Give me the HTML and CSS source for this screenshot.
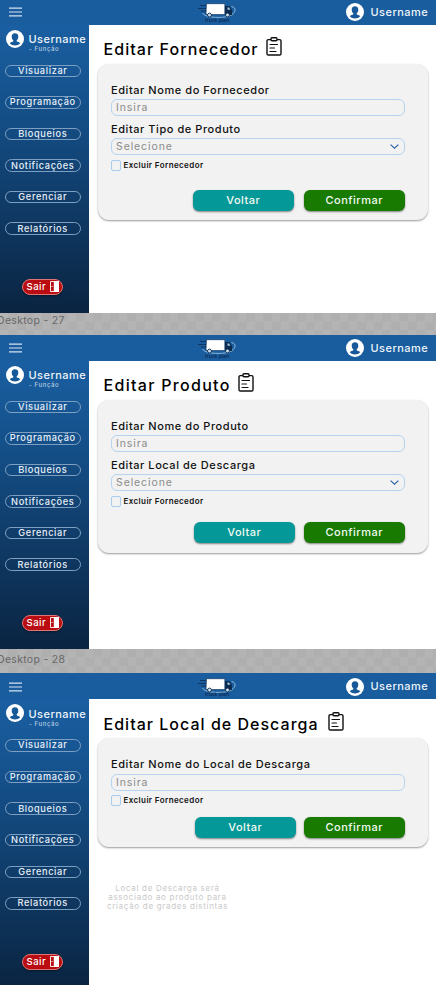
FILE: index.html
```
<!DOCTYPE html>
<html lang="pt-BR">
<head>
<meta charset="utf-8">
<title>Truck Plan</title>
<link rel="stylesheet" href="styles.css">
</head>
<body>
<svg class="defs" width="0" height="0">
  <symbol id="menu" viewBox="0 0 14 10"><path d="M0 1h14M0 5h14M0 9h14" stroke="#d5e2ef" stroke-width="1.1"/></symbol>
  <symbol id="user" viewBox="0 0 18 18"><circle cx="9" cy="9" r="9" fill="#fff"/><path d="M9 3.2c-2.2 0-3.5 1.6-3.3 3.7.1 1.500.700 2.700 1.600 3.300v1c-.8.700-2.600.900-3.500 2.100 1.300 1.400 3.100 2.200 5.200 2.200s3.900-.8 5.200-2.200c-.9-1.200-2.700-1.400-3.500-2.100v-1c.9-.6 1.500-1.800 1.600-3.300.2-2.100-1.100-3.700-3.300-3.700z" fill="#185a99"/></symbol>
  <symbol id="truck" viewBox="0 0 38 15"><path d="M2 2.500h7M0 5.500h8M3 8h5" stroke="#0b2c50" stroke-width=".8"/><path d="M4.500 10c2 5.500 24 5.500 29 2 4.500-3 5-7.500 0-8.500" fill="none" stroke="#a9cbe5" stroke-width=".8"/><path d="M8.500.7h18.300v10.800H8z" fill="#fff" stroke="#0b2c50" stroke-width=".6"/><path d="M27 3h4.500l2.500 3.800v5.200h-7z" fill="#0b2c50"/><path d="M29.500 4.500h1.500l1.300 2.200h-2.800z" fill="#a9cbe5"/><g fill="#d7e6f2" stroke="#0b2c50" stroke-width=".9"><circle cx="11.500" cy="12" r="1.900"/><circle cx="29.500" cy="12" r="1.900"/></g></symbol>
  <symbol id="clip" viewBox="0 0 16 19"><g fill="none" stroke="#111" stroke-width="1.400" stroke-linecap="round" stroke-linejoin="round"><path d="M4.500 2.600H2.300Q1 2.600 1 3.900v12.800Q1 18 2.300 18h11.400q1.300 0 1.300-1.300V3.900q0-1.300-1.300-1.300h-2.200"/><path d="M5 1.800Q5 .8 6 .8h4q1 0 1 1v1q0 1-1 1H6q-1 0-1-1z"/><path d="M4 7.500h7.500M4 11h4.500M4 14.500h6" stroke-width="1.200"/></g></symbol>
  <symbol id="door" viewBox="0 0 9 11"><path d="M4 .5H.5v10H4" fill="none" stroke="#fff" stroke-width=".9"/><path d="M3.800 0H9v11H3.800z" fill="#fff"/><path d="M1.500 5.500h1" stroke="#fff"/></symbol>
  <symbol id="chev" viewBox="0 0 9 5"><path d="M.6.6 4.500 4.200 8.400.6" fill="none" stroke="#2a63a5" stroke-width="1.200"/></symbol>
</svg>

<section class="frame first">
  <header class="bar">
    <svg class="menu"><use href="#menu"/></svg>
    <div class="logo"><svg><use href="#truck"/></svg><span>truck plan</span></div>
    <div class="account"><svg><use href="#user"/></svg><span class="name">Username</span></div>
  </header>
  <div class="body">
    <nav class="side">
      <div class="profile"><svg><use href="#user"/></svg><div><span class="name">Username</span><small>- Função</small></div></div>
      <a class="pill">Visualizar</a><a class="pill">Programação</a><a class="pill">Bloqueios</a><a class="pill">Notificações</a><a class="pill">Gerenciar</a><a class="pill">Relatórios</a>
      <a class="exit">Sair<svg><use href="#door"/></svg></a>
    </nav>
    <main>
      <h1><span>Editar Fornecedor</span><svg><use href="#clip"/></svg></h1>
      <form class="card supplier">
        <label>Editar Nome do Fornecedor</label>
        <div class="field">Insira</div>
        <label>Editar Tipo de Produto</label>
        <div class="field select">Selecione<svg><use href="#chev"/></svg></div>
        <div class="check"><i></i><span>Excluir Fornecedor</span></div>
        <div class="actions"><b class="back">Voltar</b><b class="ok">Confirmar</b></div>
      </form>
    </main>
  </div>
</section>

<div class="caption">Desktop - 27</div>

<section class="frame">
  <header class="bar">
    <svg class="menu"><use href="#menu"/></svg>
    <div class="logo"><svg><use href="#truck"/></svg><span>truck plan</span></div>
    <div class="account"><svg><use href="#user"/></svg><span class="name">Username</span></div>
  </header>
  <div class="body">
    <nav class="side">
      <div class="profile"><svg><use href="#user"/></svg><div><span class="name">Username</span><small>- Função</small></div></div>
      <a class="pill">Visualizar</a><a class="pill">Programação</a><a class="pill">Bloqueios</a><a class="pill">Notificações</a><a class="pill">Gerenciar</a><a class="pill">Relatórios</a>
      <a class="exit">Sair<svg><use href="#door"/></svg></a>
    </nav>
    <main>
      <h1 class="loose"><span>Editar Produto</span><svg><use href="#clip"/></svg></h1>
      <form class="card product">
        <label>Editar Nome do Produto</label>
        <div class="field">Insira</div>
        <label>Editar Local de Descarga</label>
        <div class="field select">Selecione<svg><use href="#chev"/></svg></div>
        <div class="check"><i></i><span>Excluir Fornecedor</span></div>
        <div class="actions"><b class="back">Voltar</b><b class="ok">Confirmar</b></div>
      </form>
    </main>
  </div>
</section>

<div class="caption tall">Desktop - 28</div>

<section class="frame">
  <header class="bar">
    <svg class="menu"><use href="#menu"/></svg>
    <div class="logo"><svg><use href="#truck"/></svg><span>truck plan</span></div>
    <div class="account"><svg><use href="#user"/></svg><span class="name">Username</span></div>
  </header>
  <div class="body">
    <nav class="side">
      <div class="profile"><svg><use href="#user"/></svg><div><span class="name">Username</span><small>- Função</small></div></div>
      <a class="pill">Visualizar</a><a class="pill">Programação</a><a class="pill">Bloqueios</a><a class="pill">Notificações</a><a class="pill">Gerenciar</a><a class="pill">Relatórios</a>
      <a class="exit">Sair<svg><use href="#door"/></svg></a>
    </nav>
    <main>
      <h1 class="wide"><span>Editar Local de Descarga</span><svg><use href="#clip"/></svg></h1>
      <form class="card place">
        <label>Editar Nome do Local de Descarga</label>
        <div class="field">Insira</div>
        <div class="check"><i></i><span>Excluir Fornecedor</span></div>
        <div class="actions"><b class="back">Voltar</b><b class="ok">Confirmar</b></div>
      </form>
      <p class="hint">Local de Descarga será<br>associado ao produto para<br>criação de grades distintas</p>
    </main>
  </div>
</section>
</body>
</html>
```
FILE: styles.css
```
* { box-sizing: border-box; }
html, body { height: 985px; overflow: hidden; }
body { margin: 0; background: #fff; font-family: Inter, "Open Sans", sans-serif; font-weight: 500; color: #111; }
svg { display: block; flex: none; }
.defs { position: absolute; }

.frame { height: 314.5px; overflow: hidden; background: #fff; }
.first { margin-top: -1.5px; }
.bar { height: 26px; background: #195d9e; display: grid; grid-template-columns: 198px 1fr auto; padding: 0 8.5px 0 8.5px; }
.menu { width: 13.5px; height: 10px; margin-top: 8.7px; }
.logo { width: 38px; margin: 4.5px 0 0 -8.5px; text-align: center; }
.logo svg { width: 38px; height: 15px; }
.logo span { display: block; font-size: 5px; line-height: 5px; margin-top: -.5px; color: #0b2550; white-space: nowrap; }
.account { display: flex; gap: 6.5px; }
.account svg { width: 18px; height: 18px; margin-top: 4.6px; }
.account .name { margin-top: 6px; }
.name { display: block; width: 57px; font-size: 11px; line-height: 14px; letter-spacing: .45px; color: #eef4fa; white-space: nowrap; }

.body { display: flex; height: 288.5px; }
.side { width: 89px; background: linear-gradient(#1a5fa2, #15528d 25%, #0a2441); padding-top: 5px; flex: none; }
.profile { display: flex; gap: 4.5px; padding-left: 6px; height: 35px; }
.profile svg { width: 18px; height: 18px; }
.profile .name { margin-top: 2.5px; }
.profile small { display: block; font-size: 6px; line-height: 7px; letter-spacing: .6px; color: #b8cfe4; margin: -1px 0 0 .5px; }
.pill { display: flex; align-items: center; justify-content: center; width: 75.5px; height: 12.5px; margin: 0 0 19.1px 5px; border: 1px solid #7d9fc1; border-radius: 7px; font-size: 9.2px; line-height: 12px; font-weight: 500; letter-spacing: .65px; color: #e9f0f7; }
.exit { display: flex; align-items: center; gap: 3.5px; width: 41px; height: 16px; margin: 44px 0 0 22px; padding-left: 3.5px; border: 1px solid #d77; border-radius: 8px; background: #b90d12; font-size: 9.5px; font-weight: 500; letter-spacing: .5px; color: #fff; box-shadow: 0 1px 2px #0006; }
.exit svg { width: 9px; height: 11px; }

main { flex: 1; padding: 10.5px 8.5px 0 9px; }
h1 { display: flex; margin: 0 0 0 5.5px; height: 28.5px; font-size: 16px; line-height: 29px; font-weight: 500; letter-spacing: 1.07px; color: #000; white-space: nowrap; }
h1 svg { width: 16px; height: 19px; margin: 2px 0 0 7px; }
h1.wide { letter-spacing: 1.02px; }
h1.wide svg { margin-left: 9.5px; }
h1.loose { letter-spacing: 1.3px; }
.card { height: 156px; padding: 19px 22.5px 0 13px; background: #f2f2f2; border-radius: 11px; box-shadow: 0 1px 2px #0006; }
label { display: block; height: 16.5px; font-size: 11px; line-height: 14px; letter-spacing: .56px; white-space: nowrap; }
.field { display: flex; align-items: center; justify-content: space-between; height: 17px; margin-bottom: 5.5px; padding: 0 5.5px 0 4px; border: 1px solid #b6d3f0; border-radius: 6px; font-size: 10.5px; font-weight: 400; letter-spacing: .9px; color: #8b8b8b; }
.field svg { width: 9px; height: 5px; }
.check { display: flex; gap: 3px; height: 11px; margin-top: 4.5px; font-size: 8px; line-height: 11px; font-weight: 600; letter-spacing: .4px; }
.select + .check { margin-top: -1px; }
.check i { width: 9.5px; height: 11px; border: 1px solid #a9cbec; border-radius: 2px; }
.actions { display: flex; justify-content: flex-end; gap: 9.5px; margin-top: 19px; }
.actions b { width: 101.5px; height: 21px; border-radius: 6px; text-align: center; font-size: 11px; line-height: 21px; font-weight: 500; letter-spacing: .5px; color: #f2faf2; box-shadow: 0 1px 2px #0007; }
.back { background: #059899; }
.ok { background: #187a00; }
.product { height: 153.5px; }
.product .actions { margin-top: 15.5px; gap: 8.5px; }
.place { height: 109px; }
.place .check { margin-top: -1px; }
.place .actions { margin-top: 10.5px; gap: 7.5px; }
.hint { width: 124px; margin: 36.5px 0 0 7.5px; text-align: center; font-size: 8px; line-height: 9.2px; font-weight: 400; letter-spacing: .7px; color: #c9c9c9; white-space: nowrap; }

.caption { height: 21.5px; padding-top: 1px; overflow: hidden; text-indent: -3px; font-size: 10.5px; line-height: 13px; font-weight: 400; letter-spacing: .3px; color: #686868; background: repeating-conic-gradient(#afafaf 0 25%, #b4b4b4 0 50%) 0 0 / 17px 17px; }
.tall { height: 24.2px; padding-top: 4px; }
```
